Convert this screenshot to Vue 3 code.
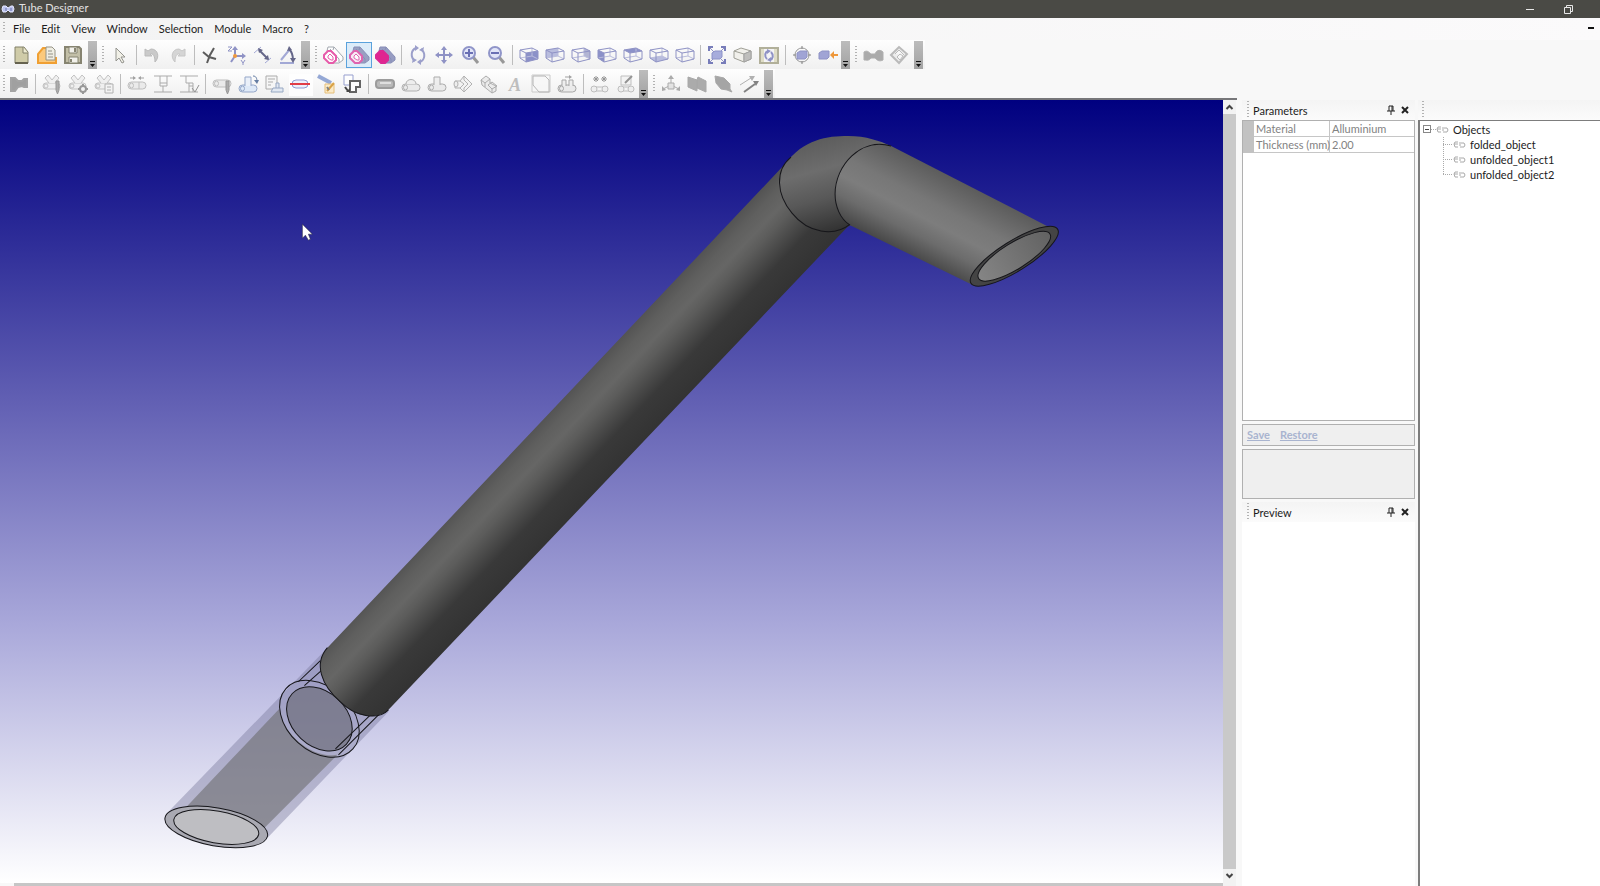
<script setup>
const menus = ['File', 'Edit', 'View', 'Window', 'Selection', 'Module', 'Macro', '?']

const B = '#8488c0'
const F = '#8086c4'
const G = '#a3a3a3'
const L = '#b9b9b9'

const path = (d, stroke = B, fill = 'none', w = 1) =>
  `<path d="${d}" stroke="${stroke}" fill="${fill}" stroke-width="${w}"/>`

const faces = {
  front: ['M10 11L22 9V17L10 20Z', F],
  back: ['M4 8L16 6V14L4 16Z', '#b3b7dc'],
  right: ['M16 6L22 9V17L16 14Z', '#abaed0'],
  left: ['M4 8L10 11V20L4 16Z', F],
  top: ['M4 8L16 6L22 9L10 11Z', F],
  bottom: ['M4 16L16 14L22 17L10 20Z', '#b3b7dc'],
}
const cube = (face) =>
  (face ? path(faces[face][0], 'none', faces[face][1]) : '') +
  path('M4 16L16 14L22 17 M16 6V14', '#b4b7da') +
  path('M4 8L16 6L22 9L10 11Z M4 8V16L10 20V11 M10 20L22 17V9')

const tube = (y = 12, stroke = L, fill = '#e9e9e9') =>
  `<rect x="4" y="${y}" width="18" height="7" rx="3.5" fill="${fill}" stroke="${stroke}"/>` +
  `<ellipse cx="7.5" cy="${y + 3.5}" rx="2" ry="2.5" fill="none" stroke="${stroke}"/>`

const yTube =
  '<rect x="4" y="12" width="17" height="6" rx="3" fill="#efefef" stroke="#bdbdbd"/>' +
  path('M10 12L6 7L9 4L13 9L17 4L20 7L16 12', '#bdbdbd', '#efefef') +
  '<ellipse cx="7" cy="15" rx="2" ry="2" fill="none" stroke="#bdbdbd"/>'

const layers = (line, front, inner, backLine, back) =>
  path('M7 9L8 5H14L23 15V18L19 21H12Z', backLine, back) +
  path('M10 7L19 17V20 M14 5L13 8', backLine) +
  path('M4 13L8 9H11L16 14V18L13 21H9L4 16Z', line, front, 2) +
  path('M8 14L10 12L13 15V18H11L8 16Z', line, inner, 1)

const tiny = (x, y) =>
  path(`M${x} ${y - 3}V${y + 3} M${x - 3} ${y}H${x + 3} M${x - 2} ${y - 2}L${x + 2} ${y + 2} M${x + 2} ${y - 2}L${x - 2} ${y + 2}`, '#8b8b8b')

const rotate = (c) =>
  path('M10 19C5 15 6 8 11 6 M16 7C21 11 20 18 15 20', c, 'none', 2) +
  path('M10 3L14 6L10 9Z M16 17L12 20L16 23Z M14 8L19 5L18 10Z M12 18L7 21L8 16Z', 'none', c)

const lens = (sign) =>
  path('M16 15L21 21', '#8f8f8f', 'none', 3) +
  '<circle cx="12" cy="11" r="6" fill="#dfe3f8" stroke="#858bc4" stroke-width="2"/>' +
  path(sign, '#5a61ad', 'none', 2)

const pencil = path('M17 10H20V19L18.5 23L17 19Z', '#8f8f8f', '#a5a5a5')

const icons = {
  new: path('M7 5H16L20 10V21H7Z', '#77745a', '#cbc7a0', 1) + path('M15 5V11H20', '#77745a', '#eeebd0') + path('M7 21H20', '#56533e', 'none', 2),
  open: path('M4 21V12L9 6H13V16H22V21Z', '#f0971e', '#fcc56f', 2) + path('M12 5H18L21 8V18H12Z', '#8c897a', '#efede2') + path('M14 9H18 M14 12H19 M14 15H19', '#88867a'),
  save: path('M5 5H19L21 7V21H5Z', '#7b7863', '#bdb99f', 2) + path('M9 5H17V11H9Z M9 15H18V21H9Z', '#7b7863', '#f2f1ea') + path('M15 6V10 M11 17V20', '#7b7863', 'none', 2),
  pointer: path('M9 6V19L12 16L15 21L17 20L14 15H18Z', '#8a8a84', '#f1f0e6'),
  undo: path('M6 7V14H13L11 12C14 11 16 14 16 20C21 15 19 7 12 7L9 9Z', '#b5b5b5', '#c6c6c6'),
  redo: path('M20 7V14H13L15 12C12 11 10 14 10 20C5 15 7 7 14 7L17 9Z', '#c2c2c2', '#d2d2d2'),
  cross: path('M6 10L12 15L19 17 M17 6L13 13L10 21', '#4c4c4c', 'none', 2),
  axes: path('M12 14V6 M12 14H21 M12 14L8 20', B, 'none', 2) + path('M9 8L12 4L15 8Z M19 11L23 14L19 17Z', 'none', B) + '<circle cx="12" cy="14" r="2" fill="#f0902a"/>' + path('M5 5H9L5 9H9 M18 18L20 21L22 18 M20 21V23', B),
  line: path('M5 11L12 5 M16 21L22 16', '#9aa0d2') + path('M10 8L19 17', '#55577d', 'none', 2) + path('M9 6L14 8L10 11Z M20 18L15 17L19 13Z', 'none', '#55577d'),
  angle: path('M5 21H19 M6 18L15 7', '#9aa0d2', 'none', 2) + path('M14 7C17 10 18 13 18 18', '#55577d', 'none', 2) + path('M12 9L14 4L17 8Z M15 16H21L18 21Z', 'none', '#55577d'),
  shade1: layers('#e64aa2', '#fff', '#fff', '#9aa0a8', '#fff'),
  shade2: layers('#e055a8', '#fbeaf4', '#fff', '#7f86b0', '#9298bd'),
  shade3: layers('#d9128a', '#e00f83', '#e00f83', '#7c83b0', '#8d93bd'),
  rotate: rotate('#9296c6'),
  pan: path('M13 6V20 M6 13H20', B, 'none', 2) + path('M10 8L13 4L16 8Z M10 18L13 22L16 18Z M8 10L4 13L8 16Z M18 10L22 13L18 16Z', 'none', B),
  zoomin: lens('M8 11H16 M12 7V15'),
  zoomout: lens('M8 11H16'),
  front: cube('front'), back: cube('back'), right: cube('right'), left: cube('left'),
  top: cube('top'), bottom: cube('bottom'), wire: cube(),
  fit: path('M6 6L20 20 M20 6L6 20', B, 'none', 1) + path('M5 9V5H9 M17 5H21V9 M21 17V21H17 M9 21H5V17', '#6a70b3', 'none', 2) + path('M8 11L11 9H18V15L16 17H8Z', '#8288c4', '#9fa5da'),
  section: path('M4 9L11 6L21 9V17L14 20L4 16Z', '#96968c', '#f1f0ea') + path('M4 9L14 12V20 M14 12L21 9', '#96968c') + path('M14 12L21 9V17L14 20Z', '#9a9a9a', '#bab9b6'),
  refresh: '<rect x="4" y="6" width="18" height="15" fill="#dddbc2" stroke="#aaa890" stroke-width="2"/><rect x="8" y="7" width="10" height="13" fill="#f4f4f6"/>' + path('M11 17C8 14 9 10 12 9 M15 10C18 13 17 17 14 18', B, 'none', 2) + path('M11 7L15 9L11 12Z M15 15L11 18L15 20Z', 'none', B),
  orbit: '<circle cx="13" cy="13" r="7" fill="none" stroke="#8f8f8f"/>' + path('M8 11L11 9H18V15L16 17H8Z', B, '#979cd2') + path('M13 4V7 M13 19V22 M4 13H7 M19 13H22', '#777'),
  flyto: path('M4 11L7 9H14V15L12 17H4Z', B, '#979cd2') + path('M18 13H23', '#ee8d25', 'none', 2) + path('M15 13L19 9V17Z', 'none', '#ee8d25'),
  pipe: path('M4 10C7 8 9 10 11 12H15C17 7 21 8 23 10V18C19 20 17 18 15 16H11C9 19 7 18 4 18Z', '#a9a9a9', '#a3a3a3'),
  diamond: path('M5 13L13 5L21 12L13 21Z', '#b4b4b4', '#ececec', 2) + path('M9 12L13 8L18 13 M11 15L14 12L17 14L14 18Z', '#b5b5b5', '#f8f8f8'),

  module: path('M5 7H9L12 10H16L18 8H21V16H18L16 15L12 16L9 20H5Z', '#9c9c9c', '#979797', 2),
  ypen: yTube + pencil,
  ygear: yTube + '<circle cx="18" cy="18" r="3" fill="#f2f2f2" stroke="#8f8f8f" stroke-width="2"/>' + path('M18 13V15 M18 21V23 M13 18H15 M21 18H23', '#8f8f8f', 'none', 2),
  ypage: yTube + path('M14 13H22V22H14Z M16 16H20 M16 19H20', '#aaa', '#f3f3f3'),
  join: tube(11) + path('M15 11V18', L) + path('M6 7H11 M20 7H15', '#999') + path('M9 5L12 7L9 9Z M17 5L14 7L17 9Z', 'none', '#999'),
  beam: path('M4 5H22 M4 21H22 M10 5V12H17V5 M17 12V15H13V21 M10 12V15H13', G),
  beamcheck: path('M4 5H22 M4 21H22 M10 5V12H17V21 M13 15H17 M13 12V21', G) + path('M16 17L19 21L23 14', '#888', 'none', 1),
  tubepen: tube(9) + pencil,
  bend: tube(14, '#8b9fc4', '#dce8f8') + path('M10 15V6H16V15', '#8b9fc4', '#e9f0fa') + path('M18 5C21 5 22 7 22 11', '#55709a') + path('M19 9L22 13L24 9Z', 'none', '#55709a'),
  report: path('M5 5H16V18H5Z M7 8H14 M7 11H12 M7 14H10', G, '#f6f6f6') + path('M12 17H22V21H10Z M15 17V12H18V17', '#8da0be', '#e0e7f2'),
  cutline: '<rect width="24" height="22" x="2" y="3" fill="#fff"/>' + '<rect x="5" y="9" width="16" height="8" rx="4" fill="#eef0fc" stroke="#8793cf"/>' + path('M3 13H23', '#e02b35', 'none', 2),
  editpipe: path('M5 5L18 12', '#8ba0d2', 'none', 4) + path('M12 13H21V22H12Z', '#e5ba6e', '#fbeac4', 1) + path('M14 20L21 12', '#d69a34', 'none', 2) + path('M14 16L16 19', '#777', 'none', 2),
  offset: path('M5 4H14V14H5Z', '#8d97cb', '#fff') + path('M11 10H21V16H17V21H11Z', '#555', '#fff', 2) + path('M6 16L9 20', '#333', 'none', 2) + path('M7 21H11V17Z', 'none', '#333'),
  solid: '<rect x="4" y="9" width="18" height="8" rx="3" fill="#b3b3b3" stroke="#939393" stroke-width="2"/>' + path('M8 12H19', '#ddd', 'none', 2),
  hole: tube(13, '#a9a9a9') + path('M8 13C8 7 18 7 18 13', '#a9a9a9', '#ededed', 1),
  tee: tube(13, '#a5a5a5') + path('M10 14V6H16V14', '#a5a5a5', '#ededed'),
  turn: path('M5 10H10L14 5L22 13L14 21L10 17H5Z', '#ababab', '#f2f2f2') + path('M10 10L14 13L10 17 M14 5V9L18 13L14 17V21', '#ababab') + '<ellipse cx="6" cy="13" rx="2" ry="3" fill="#eee" stroke="#ababab"/>',
  links: path('M5 9L10 5L14 8V12L20 15V20L16 22L6 14Z', '#a5a5a5', '#eaeaea') + path('M5 9L9 12L14 8 M9 12V16 M12 14L16 11L21 15L16 18Z M16 18V22', '#a5a5a5'),
  text: '<text x="13" y="20" text-anchor="middle" font-family="Liberation Serif, serif" font-style="italic" font-weight="bold" font-size="18" fill="#b8b8b8">A</text>',
  plate: path('M4 4H22V21H4Z', '#c6c6c6', '#f7f7f7') + path('M5 14V5H17L21 9V21H11Z', '#b0b0b0'),
  saddle: tube(14, '#9f9f9f') + path('M8 15V9H12V15 M15 15V9H19V15', '#9f9f9f', '#eee') + path('M11 6H16', '#999') + path('M15 4L18 6L15 8Z', 'none', '#999'),
  nest: tiny(9, 8) + tiny(17, 8) + '<circle cx="7" cy="18" r="3" fill="#eee" stroke="#b9b9b9"/><circle cx="18" cy="18" r="3" fill="#eee" stroke="#b9b9b9"/>' + path('M9 16H16 M9 20H16', L),
  sign: path('M8 5H18V14H8Z', L, '#f3f3f3') + '<circle cx="8" cy="18" r="3" fill="#eee" stroke="#b9b9b9"/><circle cx="18" cy="18" r="3" fill="#eee" stroke="#b9b9b9"/>' + path('M10 16H16 M10 20H16', L) + path('M12 12L19 5', '#888', 'none', 2),
  gizmo: path('M13 5V12 M5 18L11 15 M21 18L15 15', G) + path('M10 8L13 4L16 8Z M4 15V20L8 19Z M22 15V20L18 19Z', 'none', G) + path('M10 12H16V18H10Z', G, '#e1e1e1'),
  flip: path('M4 6L13 9V20L4 16Z M13 9L14 6L22 10V21L13 17Z', '#a0a0a0', '#a3a3a3'),
  brush: path('M5 5L14 7L20 13L20 18L22 21L17 19L11 18L6 12Z', '#a0a0a0', '#9d9d9d'),
  arrows: path('M4 14L15 7', '#aaa') + path('M8 21L19 13', '#777', 'none', 2) + path('M13 5L19 5L16 10Z', 'none', '#aaa') + path('M17 10L23 10L20 15Z', 'none', '#777'),
}

const rows = [
  [
    { id: 'file', groups: [['new', 'open', 'save']] },
    { id: 'edit', groups: [['pointer'], ['undo', 'redo'], ['cross', 'axes', 'line', 'angle']] },
    {
      id: 'view',
      groups: [
        ['shade1', 'shade2', 'shade3'],
        ['rotate', 'pan', 'zoomin', 'zoomout'],
        ['front', 'back', 'right', 'left', 'top', 'bottom', 'wire'],
        ['fit', 'section', 'refresh'],
        ['orbit', 'flyto'],
      ],
    },
    { id: 'extra', groups: [['pipe', 'diamond']] },
  ],
  [
    {
      id: 'tubes',
      groups: [
        ['module'],
        ['ypen', 'ygear', 'ypage'],
        ['join', 'beam', 'beamcheck'],
        ['tubepen', 'bend', 'report', 'cutline', 'editpipe', 'offset'],
        ['solid', 'hole', 'tee', 'turn', 'links', 'text', 'plate', 'saddle'],
        ['nest', 'sign'],
      ],
    },
    { id: 'transform', groups: [['gizmo', 'flip', 'brush', 'arrows']] },
  ],
]

const params = [
  ['Material', 'Alluminium'],
  ['Thickness (mm)', '2.00'],
]
const objects = ['folded_object', 'unfolded_object1', 'unfolded_object2']
</script>

<template>
  <div class="app">
    <header class="title">
      <svg class="logo" viewBox="0 0 14 10"><path d="M2 2H5L7 4L10 2H12L13 5L12 8H9L7 6L5 8H2L1 5Z" fill="#bcc3ee" stroke="#e5e8ff" /><path d="M5 4V7M10 4V7" stroke="#6870a8" /></svg>
      <span class="name">Tube Designer</span>
      <button class="sys" aria-label="Minimize"><svg viewBox="0 0 12 12"><path d="M2 6.5H10" stroke="#e8e8e8" /></svg></button>
      <button class="sys" aria-label="Restore window"><svg viewBox="0 0 12 12"><path d="M2.500 4.500H8.500V10.500H2.500Z M4.500 4V2.500H10.500V8.500H9" stroke="#e8e8e8" fill="none" /></svg></button>
    </header>

    <nav class="menu">
      <i class="grip"></i>
      <button v-for="m in menus" :key="m">{{ m }}</button>
      <button class="mdi" aria-label="Minimize document"><svg viewBox="0 0 8 8"><path d="M1 4H7" stroke="#111" stroke-width="2" /></svg></button>
    </nav>

    <div class="bars">
      <div v-for="(row, r) in rows" :key="r" class="row">
        <div v-for="bar in row" :key="bar.id" class="bar" :class="bar.id">
          <i class="grip"></i>
          <template v-for="(g, gi) in bar.groups" :key="gi">
            <i v-if="gi" class="sep"></i>
            <button v-for="n in g" :key="n" class="tool" :class="{ on: n === 'shade2' }" :aria-label="n">
              <svg viewBox="0 0 26 26"><g v-html="icons[n]"></g></svg>
            </button>
          </template>
          <button class="more" aria-label="More buttons"><svg viewBox="0 0 9 28"><path d="M2 20H7V21H2Z M2 23H7L4.500 26Z" fill="#111" /></svg></button>
        </div>
      </div>
    </div>

    <main class="body">
      <section class="viewer">
        <div class="canvas">
          <svg class="scene" viewBox="0 101 1223 782" preserveAspectRatio="xMinYMin slice">
            <defs>
              <linearGradient id="main" gradientUnits="userSpaceOnUse" x1="740" y1="210" x2="805" y2="272">
                <stop offset="0" stop-color="#525252" /><stop offset=".15" stop-color="#5f5f5e" /><stop offset=".3" stop-color="#666665" /><stop offset=".42" stop-color="#5c5c5b" /><stop offset=".72" stop-color="#393939" /><stop offset="1" stop-color="#333" />
              </linearGradient>
              <linearGradient id="arm" gradientUnits="userSpaceOnUse" x1="890" y1="147" x2="849" y2="226">
                <stop offset="0" stop-color="#5c5c5c" /><stop offset=".35" stop-color="#777" /><stop offset=".55" stop-color="#7d7d7d" /><stop offset=".75" stop-color="#6c6c6c" /><stop offset="1" stop-color="#474747" />
              </linearGradient>
              <linearGradient id="elbow" gradientUnits="userSpaceOnUse" x1="805" y1="140" x2="830" y2="232">
                <stop offset="0" stop-color="#5b5b5b" /><stop offset=".35" stop-color="#6d6d6d" /><stop offset=".65" stop-color="#585858" /><stop offset="1" stop-color="#333" />
              </linearGradient>
              <linearGradient id="bore" x1="0" y1="0" x2="1" y2="0">
                <stop offset="0" stop-color="#858585" /><stop offset="1" stop-color="#626262" />
              </linearGradient>
            </defs>

            <g class="ghost">
              <path d="M166 814L327 648L388 712L267 838Q240 812 166 814Z" fill="#77779a" fill-opacity=".42" />
              <path d="M187 806L279 709A45 32 42 0 0 337 755L259 833Q235 806 187 806Z" fill="#6f6f72" fill-opacity=".62" />
              <ellipse cx="319" cy="719" rx="37" ry="27" transform="rotate(43 319 719)" fill="#6d6e7c" fill-opacity=".7" class="edge" />
              <ellipse cx="319" cy="719" rx="45" ry="32" transform="rotate(42 319 719)" class="edge open" />
              <ellipse cx="216" cy="827" rx="52" ry="19" transform="rotate(10 216 827)" fill="#a9a9b2" class="edge" />
              <ellipse cx="216" cy="827" rx="43" ry="16" transform="rotate(10 216 827)" fill="#bebec2" class="edge" />
              <path d="M298 682L320 661M304 686L322 670M335 749L369 716M338 755L379 714" class="edge open" />
            </g>

            <path d="M327 648L784 165L848 226L388 710C380 719 355 720 340 702C321 686 313 664 327 648Z" fill="url(#main)" />
            <path d="M327 648C313 664 321 686 340 702C355 717 377 721 388 710" class="edge open" />
            <path d="M784 165C803 140 826 137 847 137C865 137 879 142 890 147L849 226C833 238 809 236 791 214C776 198 774 178 784 165Z" fill="url(#elbow)" />
            <path d="M790 158C774 171 775 195 791 214C807 234 833 238 849 225" class="edge open" />
            <path d="M890 147L1046 227L972 286L849 226C839 220 834 207 834 195C834 164 860 140 890 147Z" fill="url(#arm)" />
            <path d="M890 147C860 138 834 166 834 195C834 207 839 220 849 226" class="edge open" />
            <ellipse cx="1013" cy="257" rx="51" ry="15" transform="rotate(-32 1013 257)" fill="#444" class="edge" />
            <ellipse cx="1013" cy="257" rx="42" ry="13" transform="rotate(-32 1013 257)" fill="url(#bore)" class="edge" />
            <path d="M302 225V239L305 236L308 241L310 240L308 235H312Z" fill="#fff" stroke="#223" stroke-width=".5" />
          </svg>
        </div>
        <div class="hscroll"></div>
      </section>
      <div class="vscroll">
        <button aria-label="Scroll up"><svg viewBox="0 0 13 14"><path d="M3.500 9L6.500 6L9.500 9" /></svg></button>
        <div class="track"></div>
        <button aria-label="Scroll down"><svg viewBox="0 0 13 14"><path d="M3.500 5L6.500 8L9.500 5" /></svg></button>
      </div>

      <aside class="dock">
        <div class="head">
          <i class="grip"></i><h2>Parameters</h2>
          <button aria-label="Pin"><svg viewBox="0 0 10 10"><path d="M3 1H7V6M3 1V6M1 6H9M5 6V10M6 1V6" /></svg></button>
          <button aria-label="Close"><svg viewBox="0 0 10 10"><path d="M2 2L8 8M8 2L2 8" class="bold" /></svg></button>
        </div>
        <div class="grid">
          <table>
            <tbody>
              <tr v-for="p in params" :key="p[0]"><td class="mark"></td><th scope="row">{{ p[0] }}</th><td>{{ p[1] }}</td></tr>
            </tbody>
          </table>
        </div>
        <div class="links"><a href="#save">Save</a><a href="#restore">Restore</a></div>
        <div class="info"></div>
        <div class="head">
          <i class="grip"></i><h2>Preview</h2>
          <button aria-label="Pin"><svg viewBox="0 0 10 10"><path d="M3 1H7V6M3 1V6M1 6H9M5 6V10M6 1V6" /></svg></button>
          <button aria-label="Close"><svg viewBox="0 0 10 10"><path d="M2 2L8 8M8 2L2 8" class="bold" /></svg></button>
        </div>
        <div class="preview"></div>
      </aside>

      <aside class="side">
        <div class="head"><i class="grip"></i></div>
        <div class="tree">
          <div class="node">
            <button class="toggle" aria-label="Collapse"></button><i class="dots"></i>
            <svg class="obj" viewBox="0 0 13 9"><path d="M5 2H2L1 4L2 7H5M1 4H5M6 3H11L12 5L11 7H7M8 5H6" /></svg><span>Objects</span>
          </div>
          <ul>
            <li v-for="o in objects" :key="o" class="node">
              <i class="dots"></i>
              <svg class="obj" viewBox="0 0 13 9"><path d="M5 2H2L1 4L2 7H5M1 4H5M6 3H11L12 5L11 7H7M8 5H6" /></svg><span>{{ o }}</span>
            </li>
          </ul>
        </div>
      </aside>
    </main>
  </div>
</template>

<style>
body { margin: 0; overflow: hidden; }
</style>

<style scoped>
.app { display: flex; flex-direction: column; height: 100vh; background: #f8f8f8; color: #1c1c1c; font: 11px/15px Lato, "Open Sans", sans-serif; }
button { border: 0; padding: 0; margin: 0; background: none; font: inherit; color: inherit; }
svg { display: block; }
.grip { flex: none; width: 2px; height: 18px; background: repeating-linear-gradient(#b2b2b2 0 1px, transparent 1px 3px); }

.title { flex: none; display: flex; align-items: center; height: 18px; background: #4a4a45; color: #e2e2e2; }
.logo { width: 14px; height: 10px; margin: 0 4px 0 1px; }
.name { flex: 1; line-height: 14px; padding-bottom: 2px; }
.sys { width: 12px; margin-right: 26px; }
.sys svg { width: 12px; height: 12px; }

.menu { flex: none; display: flex; align-items: center; gap: 11px; height: 22px; padding: 0 5px 2px 3px; box-sizing: border-box; background: linear-gradient(90deg, #f3f3f3, #fbfafb); }
.menu .grip { height: 12px; margin-right: -3px; }
.mdi { margin-left: auto; }
.mdi svg { width: 8px; height: 8px; }

.bars { flex: none; height: 58px; border-bottom: 2px solid #77777a; background: #f8f8f8; width: 1237px; }
.row { display: flex; height: 29px; }
.bar { flex: none; display: flex; align-items: center; height: 29px; padding: 0 2px 0 3px; box-sizing: border-box; background: linear-gradient(#fefefe, #f0f0f0); }
.file { width: 99px; }
.edit { width: 213px; }
.view { width: 540px; }
.extra { width: 73px; }
.tubes { width: 650px; }
.transform { width: 125px; }
.bar .grip { margin-right: 3px; }
.tubes .grip { margin-right: 1px; }
.tool { flex: none; width: 26px; height: 26px; box-sizing: border-box; }
.tool svg { width: 26px; height: 26px; opacity: .9; }
.on { background: #dcecf9; outline: 1px solid #5aa2dc; outline-offset: -1px; }
.sep { flex: 1; height: 20px; background: linear-gradient(#bdbdbd, #bdbdbd) center / 1px 100% no-repeat; }
.more { flex: none; width: 9px; height: 28px; margin-left: auto; background: linear-gradient(#bcbcbc, #a2a2a2); }
.more svg { width: 9px; height: 28px; }

.body { flex: 1; min-height: 0; display: flex; }
.viewer { flex: 1; min-width: 0; display: flex; flex-direction: column; }
.canvas { flex: 1; min-height: 0; background: linear-gradient(#000080, #6361b4 39%, #a9a8da 67%, #fff); overflow: hidden; }
.scene { width: 100%; height: 100%; }
.edge { stroke: #16161a; stroke-width: 1; }
.open { fill: none; }
.hscroll { flex: none; height: 3px; margin: 0 0 0 14px; background: #c6c6c6; }
.vscroll { flex: none; width: 13px; display: flex; flex-direction: column; padding-bottom: 3px; background: #f2f2f2; }
.vscroll svg { width: 13px; height: 14px; fill: none; stroke: #444; stroke-width: 2; }
.track { flex: 1; background: #c9c9c9; }

.dock { flex: none; width: 173px; margin: 0 3px 0 6px; display: flex; flex-direction: column; }
.head { flex: none; height: 20px; display: flex; align-items: center; gap: 4px; padding: 0 5px; background: linear-gradient(#f4f4f4, #fbfbfb); }
.head h2 { flex: 1; margin: 0; font: inherit; }
.head svg { width: 10px; height: 10px; fill: none; stroke: #222; }
.head .bold { stroke-width: 2; }
.grid { flex: none; height: 301px; box-sizing: border-box; border: 1px solid #b0b0b0; background: #fff; }
table { width: 100%; border-collapse: collapse; table-layout: fixed; color: #828282; }
td, th { height: 15px; padding: 0 0 0 2px; border-bottom: 1px solid #c6c6c6; font-weight: 400; text-align: left; white-space: nowrap; line-height: 15px; }
th { width: 73px; border-right: 1px solid #c6c6c6; }
.mark { width: 9px; background: #c2c2c2; border-color: #c2c2c2; }
.links { flex: none; height: 22px; box-sizing: border-box; margin: 3px 0; border: 1px solid #b0b0b0; background: #efefef; padding: 2px 4px; display: flex; gap: 10px; }
.links a { color: #a9b4cf; font-weight: 700; }
.info { flex: none; height: 50px; box-sizing: border-box; margin-bottom: 3px; border: 1px solid #b0b0b0; background: #efefef; }
.preview { flex: 1; background: #fff; }

.side { flex: none; width: 182px; display: flex; flex-direction: column; }
.side .head { padding: 0 4px; }
.tree { flex: 1; border: solid #7d7d7d; border-width: 1px 0 0 2px; background: #fff; padding-left: 3px; }
.node { display: flex; align-items: center; height: 15px; white-space: nowrap; }
.tree > .node { height: 16px; }
.toggle { width: 8px; height: 8px; box-sizing: border-box; border: 1px solid #888; background: linear-gradient(#444, #444) center / 4px 1px no-repeat #fff; }
.dots { width: 5px; height: 1px; background: repeating-linear-gradient(90deg, #aaa 0 1px, transparent 1px 2px); }
.obj { width: 13px; height: 9px; margin-right: 4px; fill: none; stroke: #aaa; }
ul { list-style: none; margin: 0 0 0 20px; padding: 0; background: repeating-linear-gradient(#aaa 0 1px, transparent 1px 2px) left top / 1px 38px no-repeat; }
li .dots { width: 10px; }
</style>
